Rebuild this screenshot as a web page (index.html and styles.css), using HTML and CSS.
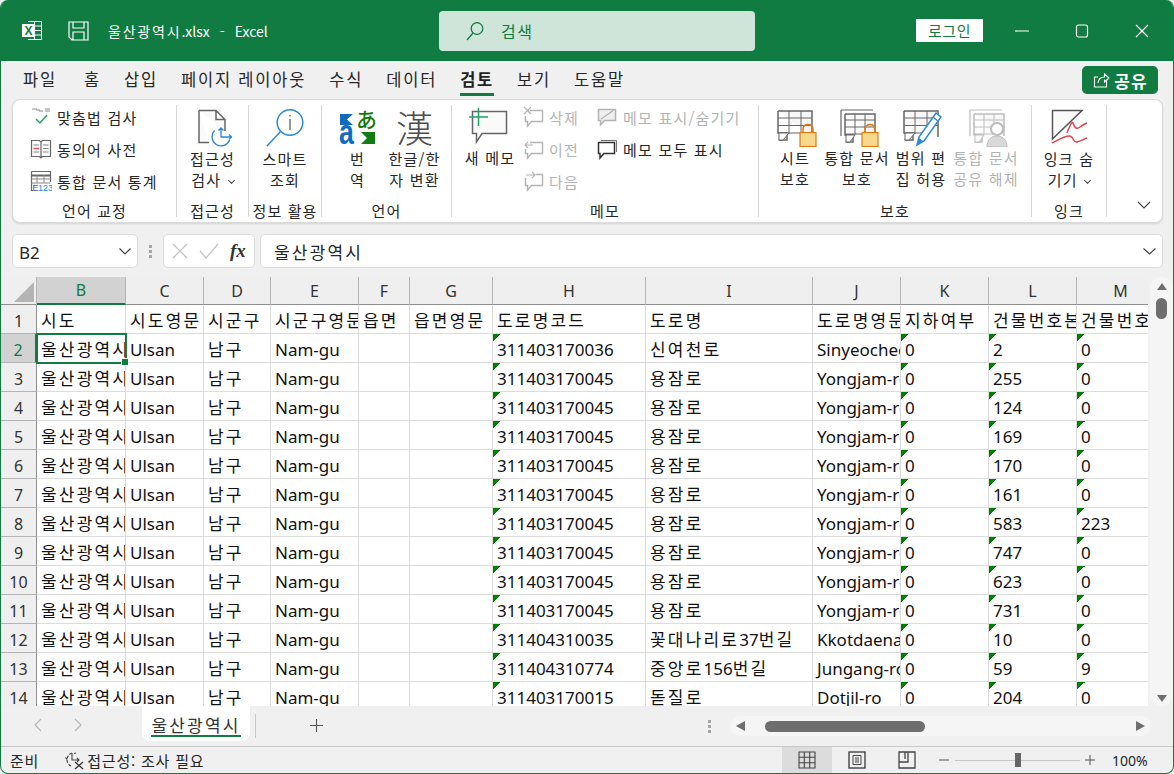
FILE: index.html
```html
<!DOCTYPE html>
<html lang="ko">
  <head>
    <meta charset="UTF-8" />
    <title>울산광역시.xlsx - Excel</title>
    <link rel="stylesheet" href="styles.css">
  </head>
  <body>
    <svg class="defs" width="0" height="0">
      <symbol id="grid" viewBox="0 0 36 32"><path d="M1 1H35V27M1 1V23H10V30H1.500" fill="#f7f7f7" stroke="currentColor" stroke-width="1.500"/><path d="M1 8H35M1 15.500H35M1 23H27M12 1V24M24 1V24" fill="none" stroke="currentColor" stroke-width="1"/><path d="M2 23H12L6 30H2Z" fill="#fff" stroke="currentColor"/></symbol>
      <symbol id="grid-book" viewBox="0 0 36 34"><path d="M1 1H33M1 1V27" fill="none" stroke="currentColor" stroke-width="1.200"/><path d="M5 5H35V27M5 5V26H13V33H5.500" fill="#f7f7f7" stroke="currentColor" stroke-width="1.500"/><path d="M5 11H35M5 18H35M5 25H28M15 5V26M25 5V26" fill="none" stroke="currentColor" stroke-width="1"/><path d="M6 26H15L10 33H6Z" fill="#fff" stroke="currentColor"/></symbol>
      <symbol id="lock" viewBox="0 0 18 24"><path d="M4 10V6.500C4 3.500 6 1.500 9 1.500S14 3.500 14 6.500V10" fill="none" stroke="#e07b12" stroke-width="1.500"/><rect x="1" y="9.500" width="16" height="14" fill="#f8d98b" stroke="#e07b12" stroke-width="1.200"/></symbol>
    </svg>

    <div class="window">
      <!-- 제목 표시줄 -->
      <header class="titlebar">
        <svg class="logo" width="22" height="21" viewBox="0 0 22 21">
          <path d="M7 1.500H20.500V19.500H7M13.500 1.500V19.500M7 6H20.500M7 10.500H20.500M7 15H20.500" fill="none" stroke="#fff"/>
          <rect x="1" y="4" width="12" height="13" fill="#fff"/>
          <text x="3.500" y="15" class="logo-x">X</text>
        </svg>
        <svg class="save" width="21" height="20" viewBox="0 0 21 20">
          <path d="M1 1H20V19H4L1 16ZM5 1V7H16V1M5 19V11H16V19" fill="none" stroke="#fff" stroke-width="1.200"/>
        </svg>
        <span class="doc-title"><span class="doc-ko">울산광역시</span>.xlsx<span class="doc-sep">-</span>Excel</span>
        <div class="search">
          <svg width="20" height="20" viewBox="0 0 20 20"><circle cx="12" cy="7.500" r="5.800" fill="none" stroke="#107c41" stroke-width="1.300"/><path d="M8 12L2 19" stroke="#107c41" stroke-width="1.300"/></svg>
          <span>검색</span>
        </div>
        <button class="login">로그인</button>
        <div class="win-btns">
          <svg width="14" height="14" viewBox="0 0 14 14"><path d="M0 7H14" stroke="#fff" stroke-width="1.200"/></svg>
          <svg width="14" height="14" viewBox="0 0 14 14"><rect x="1.500" y="1" width="11" height="12" rx="2" fill="none" stroke="#fff" stroke-width="1.200"/></svg>
          <svg width="14" height="14" viewBox="0 0 14 14"><path d="M1 1L13 13M13 1L1 13" stroke="#fff" stroke-width="1.200"/></svg>
        </div>
      </header>

      <!-- 리본 탭 -->
      <nav class="tabs">
        <span class="tab first">파일</span>
        <span class="tab">홈</span>
        <span class="tab">삽입</span>
        <span class="tab">페이지 레이아웃</span>
        <span class="tab">수식</span>
        <span class="tab">데이터</span>
        <span class="tab active">검토</span>
        <span class="tab">보기</span>
        <span class="tab">도움말</span>
        <button class="share">
          <svg width="18" height="18" viewBox="0 0 18 18"><path d="M6 6H2.500V16H14.500V10M6 12C6.500 8 9 6 12.500 6V3L17 7L12.500 11V8.500" fill="none" stroke="#fff" stroke-width="1.100"/></svg>
          공유
        </button>
      </nav>

      <!-- 리본 -->
      <section class="ribbon">
        <div class="group g-proof">
          <div class="group-body stack">
            <div class="small">
              <svg width="22" height="22" viewBox="0 0 22 22"><path d="M2 3H7V5M9 3V5H13M15 3H20M15 5H20" fill="none" stroke="#8a8a8a"/><path d="M6 13L10 17L17 9" fill="none" stroke="#21a366" stroke-width="1.500"/></svg>
              <span>맞춤법 검사</span>
            </div>
            <div class="small">
              <svg width="22" height="22" viewBox="0 0 22 22"><path d="M1.500 2.500H9.500L11 4L12.500 2.500H20.500V18.500H12.500L11 20L9.500 18.500H1.500ZM11 4V20" fill="#fafafa" stroke="#666" stroke-width="1.200"/><path d="M3.500 7H9M13 7H18.500M13 10.500H18.500M3.500 14H9M13 14H18.500" stroke="#888"/><path d="M3.500 10.500H9" stroke="#e8515a" stroke-width="1.500"/></svg>
              <span>동의어 사전</span>
            </div>
            <div class="small">
              <svg width="22" height="22" viewBox="0 0 22 22"><path d="M1.500 1.500H20.500V12M1.500 1.500V20.500H3" fill="#fff" stroke="#666" stroke-width="1.200"/><path d="M1.500 5.500H20.500" stroke="#666" stroke-width="2"/><path d="M1.500 9H20.500M7 5V13M14 5V13M1.500 13H20.500" stroke="#888"/><text x="2.500" y="21" class="mini-e">E</text><text x="8" y="21" class="mini-num">123</text></svg>
              <span>통합 문서 통계</span>
            </div>
          </div>
          <div class="group-label">언어 교정</div>
        </div>

        <div class="group g-access">
          <div class="group-body row">
            <div class="big">
              <svg width="40" height="40" viewBox="0 0 40 40">
                <path d="M7 3.500H24L33 12.500V24M24 3.500V12.500H33M17 35.500H7V3.500" fill="#fafafa" stroke="#666" stroke-width="1.500"/>
                <path d="M22.600 23.600A9 9 0 1 0 37.500 33" fill="#fff" stroke="#2b88d8" stroke-width="1.400"/>
                <path d="M29 21V30H39M37 27.500L39.500 30L37 32.500M26.500 23.500L29 21L31.500 23.500" fill="none" stroke="#2b88d8" stroke-width="1.300"/>
              </svg>
              <span>접근성<br>검사 <i class="caret"></i></span>
            </div>
          </div>
          <div class="group-label">접근성</div>
        </div>

        <div class="group g-info">
          <div class="group-body row">
            <div class="big">
              <svg width="42" height="40" viewBox="0 0 42 40">
                <circle cx="26" cy="15.500" r="12.800" fill="#fff" stroke="#2b88d8" stroke-width="1.500"/>
                <path d="M16.500 24.500L3 39" stroke="#2b88d8" stroke-width="1.500"/>
                <path d="M26 12V23" stroke="#555" stroke-width="1.200"/><path d="M26 8V9.500" stroke="#555" stroke-width="1.200"/>
              </svg>
              <span>스마트<br>조회</span>
            </div>
          </div>
          <div class="group-label">정보 활용</div>
        </div>

        <div class="group g-lang">
          <div class="group-body row">
            <div class="big w-trans">
              <svg width="38" height="40" viewBox="0 0 38 40">
                <path d="M1 7H14L8 12.500L14 18H1Z" fill="#0f6cbd"/>
                <text transform="translate(0 37) scale(0.950 1.250)" class="tr-a">a</text>
                <text x="17" y="20" class="tr-jp">あ</text>
                <path d="M22 25H36V37H22L28 31Z" fill="#107c10"/>
              </svg>
              <span>번<br>역</span>
            </div>
            <div class="big w-hanja">
              <div class="hanja">漢</div>
              <span>한글/한<br>자 변환</span>
            </div>
          </div>
          <div class="group-label">언어</div>
        </div>

        <div class="group g-memo">
          <div class="group-body row">
            <div class="big w-memo">
              <svg width="42" height="40" viewBox="0 0 42 40">
                <path d="M3.500 4.500H37.500V26.500H13L7.500 35V26.500H3.500Z" fill="#fafafa" stroke="#666" stroke-width="1.500"/>
                <path d="M9.500 1V19M0 10H19" stroke="#21a366" stroke-width="1.500"/>
              </svg>
              <span>새 메모</span>
            </div>
            <div class="stack memo-nav">
              <div class="small off"><svg width="22" height="22" viewBox="0 0 22 22"><path d="M8 4.500H20.500V15.500H9.500L5.500 20V15.500H3.500V10" fill="none" stroke="currentColor" stroke-width="1.500"/><path d="M2 1L9 8M9 1L2 8" stroke="currentColor" stroke-width="1.200"/></svg><span>삭제</span></div>
              <div class="small off"><svg width="22" height="22" viewBox="0 0 22 22"><path d="M8 4.500H20.500V15.500H9.500L5.500 20V15.500H3.500V11" fill="none" stroke="currentColor" stroke-width="1.500"/><path d="M11 7H3M6 4L3 7L6 10" fill="none" stroke="currentColor" stroke-width="1.200"/></svg><span>이전</span></div>
              <div class="small off"><svg width="22" height="22" viewBox="0 0 22 22"><path d="M3.500 8V15.500H5.500V20L9.500 15.500H20.500V4.500H14" fill="none" stroke="currentColor" stroke-width="1.500"/><path d="M4 5H13M10 2L13 5L10 8" fill="none" stroke="currentColor" stroke-width="1.200"/></svg><span>다음</span></div>
            </div>
            <div class="stack memo-show">
              <div class="small off"><svg width="22" height="22" viewBox="0 0 22 22"><path d="M2.500 3.500H19.500V14.500H8.500L4.500 19V14.500H2.500Z" fill="#efefef" stroke="currentColor" stroke-width="1.500"/><path d="M5 13L18 4" stroke="currentColor" stroke-width="1.300"/></svg><span>메모 표시/숨기기</span></div>
              <div class="small"><svg width="22" height="22" viewBox="0 0 22 22"><path d="M5 2.500H20.500V14" fill="none" stroke="#777"/><path d="M2.500 4.500H18.500V15.500H8L4 20V15.500H2.500Z" fill="#fff" stroke="#333" stroke-width="1.500"/></svg><span>메모 모두 표시</span></div>
            </div>
          </div>
          <div class="group-label">메모</div>
        </div>

        <div class="group g-protect">
          <div class="group-body row">
            <div class="big w-sheet">
              <div class="lock-icon"><svg class="sheet-svg" width="36" height="32"><use href="#grid"/></svg><svg class="lock-svg" width="18" height="24"><use href="#lock"/></svg></div>
              <span>시트<br>보호</span>
            </div>
            <div class="big w-book">
              <div class="lock-icon"><svg class="book-svg" width="36" height="34"><use href="#grid-book"/></svg><svg class="lock-svg" width="18" height="24"><use href="#lock"/></svg></div>
              <span>통합 문서<br>보호</span>
            </div>
            <div class="big w-range">
              <div class="lock-icon"><svg class="sheet-svg" width="36" height="32"><use href="#grid"/></svg>
                <svg class="pen-svg" width="28" height="36" viewBox="0 0 28 36"><path d="M21 2L26 6L9 30L2 34L4 26Z" fill="#fff" stroke="#2b88d8" stroke-width="1.500"/><path d="M18 6L23 10" stroke="#2b88d8" stroke-width="1.500"/><path d="M2 34L4 27L8 30Z" fill="#2b88d8"/></svg>
              </div>
              <span>범위 편<br>집 허용</span>
            </div>
            <div class="big w-unshare off">
              <div class="lock-icon"><svg class="book-svg" width="36" height="34"><use href="#grid-book"/></svg>
                <svg class="user-svg" width="22" height="26" viewBox="0 0 22 26"><circle cx="11" cy="8" r="6" fill="#fff" stroke="#bbb" stroke-width="2"/><path d="M1 26C1 19 5 15 11 15S21 19 21 26Z" fill="#d9d9d9" stroke="#bbb"/></svg>
              </div>
              <span>통합 문서<br>공유 해제</span>
            </div>
          </div>
          <div class="group-label">보호</div>
        </div>

        <div class="group g-ink">
          <div class="group-body row">
            <div class="big">
              <svg width="38" height="40" viewBox="0 0 38 40">
                <path d="M2.500 3.500H32L2.500 32Z" fill="#fafafa" stroke="#555" stroke-width="1.500"/>
                <path d="M17 26C20 18 22 14 23 16C25 22 27 22 30 20C32 18 35 17 37 16M2 36C8 33 16 28 20 29C24 30 23 36 27 35C31 34 34 32 37 31" fill="none" stroke="#e8424a" stroke-width="1.500"/>
              </svg>
              <span>잉크 숨<br>기기 <i class="caret"></i></span>
            </div>
          </div>
          <div class="group-label">잉크</div>
        </div>

        <div class="collapse">
          <svg width="14" height="8" viewBox="0 0 14 8"><path d="M1 1L7 7L13 1" fill="none" stroke="#444" stroke-width="1.100"/></svg>
        </div>
      </section>

      <!-- 수식 입력줄 -->
      <section class="formula">
        <div class="namebox"><span>B2</span>
          <svg width="12" height="7" viewBox="0 0 12 7"><path d="M0.500 0.500L6 6L11.500 0.500" fill="none" stroke="#444" stroke-width="1.200"/></svg>
        </div>
        <div class="dots"><b></b><b></b><b></b></div>
        <div class="fx-box">
          <svg width="16" height="16" viewBox="0 0 16 16"><path d="M1 1L15 15M15 1L1 15" stroke="#c4c4c4" stroke-width="1.300"/></svg>
          <svg width="20" height="16" viewBox="0 0 20 16"><path d="M1 8L7 15L19 1" fill="none" stroke="#c4c4c4" stroke-width="1.300"/></svg>
          <span class="fx">fx</span>
        </div>
        <div class="fx-input">
          <span>울산광역시</span>
          <svg width="13" height="7" viewBox="0 0 13 7"><path d="M0.500 0.500L6.500 6L12.500 0.500" fill="none" stroke="#444" stroke-width="1.200"/></svg>
        </div>
      </section>

      <!-- 시트 -->
      <section class="sheet-area">
        <div class="grid-wrap">
          <table class="grid">
            <colgroup>
              <col class="c-row"><col class="c-b"><col class="c-c"><col class="c-d"><col class="c-e"><col class="c-f"><col class="c-g"><col class="c-h"><col class="c-i"><col class="c-j"><col class="c-k"><col class="c-l"><col class="c-m">
            </colgroup>
            <thead>
              <tr>
                <th class="corner"><i></i></th>
                <th class="cur-col">B</th><th>C</th><th>D</th><th>E</th><th>F</th><th>G</th><th>H</th><th>I</th><th>J</th><th>K</th><th>L</th><th>M</th>
              </tr>
            </thead>
            <tbody>
              <tr><th>1</th><td class="ko">시도</td><td class="ko">시도영문</td><td class="ko">시군구</td><td class="ko">시군구영문</td><td class="ko">읍면</td><td class="ko">읍면영문</td><td class="ko">도로명코드</td><td class="ko">도로명</td><td class="ko">도로명영문</td><td class="ko">지하여부</td><td class="ko">건물번호본번</td><td class="ko">건물번호부번</td></tr>
              <tr><th class="cur-row">2</th><td class="ko sel"><span class="clip">울산광역시</span><span class="handle"></span></td><td>Ulsan</td><td class="ko">남구</td><td>Nam-gu</td><td></td><td></td><td class="n">311403170036</td><td class="ko">신여천로</td><td>Sinyeocheon-ro</td><td class="n">0</td><td class="n">2</td><td class="n">0</td></tr>
              <tr><th>3</th><td class="ko">울산광역시</td><td>Ulsan</td><td class="ko">남구</td><td>Nam-gu</td><td></td><td></td><td class="n">311403170045</td><td class="ko">용잠로</td><td>Yongjam-ro</td><td class="n">0</td><td class="n">255</td><td class="n">0</td></tr>
              <tr><th>4</th><td class="ko">울산광역시</td><td>Ulsan</td><td class="ko">남구</td><td>Nam-gu</td><td></td><td></td><td class="n">311403170045</td><td class="ko">용잠로</td><td>Yongjam-ro</td><td class="n">0</td><td class="n">124</td><td class="n">0</td></tr>
              <tr><th>5</th><td class="ko">울산광역시</td><td>Ulsan</td><td class="ko">남구</td><td>Nam-gu</td><td></td><td></td><td class="n">311403170045</td><td class="ko">용잠로</td><td>Yongjam-ro</td><td class="n">0</td><td class="n">169</td><td class="n">0</td></tr>
              <tr><th>6</th><td class="ko">울산광역시</td><td>Ulsan</td><td class="ko">남구</td><td>Nam-gu</td><td></td><td></td><td class="n">311403170045</td><td class="ko">용잠로</td><td>Yongjam-ro</td><td class="n">0</td><td class="n">170</td><td class="n">0</td></tr>
              <tr><th>7</th><td class="ko">울산광역시</td><td>Ulsan</td><td class="ko">남구</td><td>Nam-gu</td><td></td><td></td><td class="n">311403170045</td><td class="ko">용잠로</td><td>Yongjam-ro</td><td class="n">0</td><td class="n">161</td><td class="n">0</td></tr>
              <tr><th>8</th><td class="ko">울산광역시</td><td>Ulsan</td><td class="ko">남구</td><td>Nam-gu</td><td></td><td></td><td class="n">311403170045</td><td class="ko">용잠로</td><td>Yongjam-ro</td><td class="n">0</td><td class="n">583</td><td class="n">223</td></tr>
              <tr><th>9</th><td class="ko">울산광역시</td><td>Ulsan</td><td class="ko">남구</td><td>Nam-gu</td><td></td><td></td><td class="n">311403170045</td><td class="ko">용잠로</td><td>Yongjam-ro</td><td class="n">0</td><td class="n">747</td><td class="n">0</td></tr>
              <tr><th>10</th><td class="ko">울산광역시</td><td>Ulsan</td><td class="ko">남구</td><td>Nam-gu</td><td></td><td></td><td class="n">311403170045</td><td class="ko">용잠로</td><td>Yongjam-ro</td><td class="n">0</td><td class="n">623</td><td class="n">0</td></tr>
              <tr><th>11</th><td class="ko">울산광역시</td><td>Ulsan</td><td class="ko">남구</td><td>Nam-gu</td><td></td><td></td><td class="n">311403170045</td><td class="ko">용잠로</td><td>Yongjam-ro</td><td class="n">0</td><td class="n">731</td><td class="n">0</td></tr>
              <tr><th>12</th><td class="ko">울산광역시</td><td>Ulsan</td><td class="ko">남구</td><td>Nam-gu</td><td></td><td></td><td class="n">311404310035</td><td class="ko">꽃대나리로<span class="num">37</span>번길</td><td>Kkotdaenari-ro</td><td class="n">0</td><td class="n">10</td><td class="n">0</td></tr>
              <tr><th>13</th><td class="ko">울산광역시</td><td>Ulsan</td><td class="ko">남구</td><td>Nam-gu</td><td></td><td></td><td class="n">311404310774</td><td class="ko">중앙로<span class="num">156</span>번길</td><td>Jungang-ro</td><td class="n">0</td><td class="n">59</td><td class="n">9</td></tr>
              <tr><th>14</th><td class="ko">울산광역시</td><td>Ulsan</td><td class="ko">남구</td><td>Nam-gu</td><td></td><td></td><td class="n">311403170015</td><td class="ko">돋질로</td><td>Dotjil-ro</td><td class="n">0</td><td class="n">204</td><td class="n">0</td></tr>
            </tbody>
          </table>
        </div>
        <div class="vscroll">
          <i class="arrow up"></i>
          <i class="v-thumb"></i>
          <i class="arrow down"></i>
        </div>
      </section>

      <!-- 시트 탭 -->
      <section class="sheetbar">
        <svg class="nav-l" width="8" height="14" viewBox="0 0 8 14"><path d="M7 1L1 7L7 13" fill="none" stroke="#b4b4b4" stroke-width="1.100"/></svg>
        <svg class="nav-r" width="8" height="14" viewBox="0 0 8 14"><path d="M1 1L7 7L1 13" fill="none" stroke="#b4b4b4" stroke-width="1.100"/></svg>
        <div class="sheet-tab"><span>울산광역시</span></div>
        <i class="tab-sep"></i>
        <svg class="add" width="13" height="13" viewBox="0 0 13 13"><path d="M6.500 0V13M0 6.500H13" stroke="#555" stroke-width="1.100"/></svg>
        <div class="dots h-dots"><b></b><b></b><b></b></div>
        <div class="hscroll">
          <i class="arrow left"></i>
          <i class="h-thumb"></i>
          <i class="arrow right"></i>
        </div>
      </section>

      <!-- 상태 표시줄 -->
      <footer class="statusbar">
        <span class="ready">준비</span>
        <svg class="acc" width="20" height="20" viewBox="0 0 20 20">
          <path d="M8 3A7 7 0 0 0 7 16M3 9.500L1.500 7.500M10 3.500L12 3" fill="none" stroke="#444" stroke-width="1.200" stroke-dasharray="3 1.500"/>
          <path d="M8 3V10H15M13 8L15 10L13 12" fill="none" stroke="#444" stroke-width="1.100"/>
          <path d="M11 12L19 19M19 12L11 19" stroke="#333" stroke-width="1.300"/>
        </svg>
        <span>접근성: 조사 필요</span>
        <div class="views">
          <div class="view on">
            <svg width="18" height="18" viewBox="0 0 18 18"><path d="M1 1H17V17H1ZM6.300 1V17M11.700 1V17M1 6.300H17M1 11.700H17" fill="none" stroke="#444" stroke-width="1.100"/></svg>
          </div>
          <div class="view">
            <svg width="18" height="18" viewBox="0 0 18 18"><rect x="1" y="1" width="16" height="16" fill="none" stroke="#444" stroke-width="1.400"/><path d="M5 4.500H13V13.500H5ZM7 7H11M7 9H11M7 11H11" fill="none" stroke="#444"/></svg>
          </div>
          <div class="view">
            <svg width="18" height="18" viewBox="0 0 18 18"><path d="M1 1H17V17H1ZM1 11H10V1M7 1V8" fill="none" stroke="#444" stroke-width="1.300"/></svg>
          </div>
        </div>
        <div class="zoom">
          <svg width="10" height="10" viewBox="0 0 10 10"><path d="M0 5H10" stroke="#555"/></svg>
          <div class="slider"><i></i></div>
          <svg width="10" height="10" viewBox="0 0 10 10"><path d="M0 5H10M5 0V10" stroke="#555"/></svg>
          <span class="pct">100%</span>
        </div>
      </footer>
    </div>
  </body>
</html>
```

FILE: styles.css
```css
* {
  box-sizing: border-box;
}

html,
body {
  margin: 0;
  padding: 0;
  background: #f0f0f0;
}

body {
  width: 1174px;
  height: 774px;
  overflow: hidden;
  font-family: "Noto Sans CJK KR", "Noto Sans", sans-serif;
  font-size: 15px;
  color: #262626;
}

.defs {
  position: absolute;
}

i {
  display: block;
  font-style: normal;
}

button {
  border: 0;
  font: inherit;
  padding: 0;
}

/* window */
.window {
  width: 1174px;
  height: 774px;
  display: flex;
  flex-direction: column;
  background: #f0f0f0;
  border: 1px solid #107c41;
  border-top: 0;
  border-radius: 8px;
  overflow: hidden;
}

/* title bar */
.titlebar {
  height: 61px;
  flex: none;
  display: flex;
  align-items: center;
  background: #107c41;
  color: #fff;
}

.logo {
  margin-left: 20px;
}

.logo-x {
  font-family: "Liberation Sans", sans-serif;
  font-weight: 700;
  font-size: 12px;
  fill: #107c41;
}

.save {
  margin-left: 25px;
}

.doc-title {
  width: 331px;
  margin-left: 19px;
  font-size: 14px;
  white-space: nowrap;
}

.doc-ko {
  letter-spacing: 1.800px;
}

.doc-sep {
  margin: 0 10px;
}

.search {
  width: 316px;
  height: 40px;
  display: flex;
  align-items: center;
  background: #cfe5d9;
  border-radius: 4px;
  padding-left: 26px;
  color: #107c41;
  font-size: 16px;
  letter-spacing: 1.500px;
}

.search span {
  margin-left: 16px;
}

.login {
  width: 67px;
  height: 23px;
  margin-left: 161px;
  background: #fff;
  color: #107c41;
  font-size: 15px;
  letter-spacing: 0.500px;
  line-height: 23px;
}

.win-btns {
  display: flex;
  gap: 46px;
  margin-left: 32px;
}

/* ribbon tabs */
.tabs {
  height: 38px;
  flex: none;
  display: flex;
  align-items: flex-start;
  gap: 25px;
  padding-left: 22px;
  position: relative;
}

.tab {
  height: 35px;
  padding-top: 6px;
  font-size: 16.500px;
  letter-spacing: 1.800px;
  white-space: nowrap;
  margin-right: -2px;
}

.tab.first {
  margin-right: 2px;
}

.tab.active {
  font-weight: 700;
  color: #1f1f1f;
  border-bottom: 3px solid #107c41;
}

.share {
  position: absolute;
  top: 5px;
  right: 15px;
  width: 76px;
  height: 28px;
  display: flex;
  align-items: center;
  justify-content: center;
  gap: 4px;
  background: #107c41;
  color: #fff;
  border-radius: 5px;
  font-weight: 700;
  font-size: 17px;
  letter-spacing: 1px;
}

/* ribbon */
.ribbon {
  height: 124px;
  flex: none;
  margin: 0 10px 0 11px;
  display: flex;
  background: #fff;
  border: 1px solid #dadada;
  border-radius: 8px;
  box-shadow: 0 1px 2px rgba(0, 0, 0, 0.12);
}

.group {
  margin: 5px 0;
  border-right: 1px solid #d6d6d6;
  display: flex;
  flex-direction: column;
  flex: none;
}

.g-proof { width: 164px; }
.g-access { width: 72px; }
.g-info { width: 73px; }
.g-lang { width: 130px; }
.g-memo { width: 307px; }
.g-protect { width: 273px; }
.g-ink { width: 75px; }

.group-body {
  height: 94px;
}

.group-body.row {
  display: flex;
  justify-content: center;
}

.group-label {
  height: 18px;
  line-height: 23px;
  text-align: center;
  font-size: 15px;
  letter-spacing: 1.100px;
  white-space: nowrap;
}

.stack {
  display: flex;
  flex-direction: column;
  gap: 8px;
}

.g-proof .stack {
  padding-left: 17px;
}

.small {
  height: 24px;
  display: flex;
  align-items: center;
  gap: 5px;
  font-size: 15px;
  letter-spacing: 1.200px;
  white-space: nowrap;
}

.mini-e,
.mini-num {
  font-family: "Liberation Sans", sans-serif;
  font-size: 9px;
  letter-spacing: 0;
  fill: #555;
}

.mini-num {
  fill: #2b88d8;
}

.off {
  color: #b3b3b3;
}

.big {
  display: flex;
  flex-direction: column;
  align-items: center;
  padding-top: 2px;
  font-size: 15px;
  letter-spacing: 1.200px;
  line-height: 20.500px;
  text-align: center;
  white-space: nowrap;
}

.big > span {
  margin-top: 1px;
}

.g-access .big > span,
.g-info .big > span,
.g-lang .big > span,
.g-ink .big > span {
  margin-top: 2px;
}

.caret {
  display: inline-block;
  width: 5px;
  height: 5px;
  margin: 0 0 3px 2px;
  border-right: 1.200px solid #444;
  border-bottom: 1.200px solid #444;
  transform: rotate(45deg);
}

.tr-a {
  font-family: "Liberation Sans", sans-serif;
  font-weight: 700;
  font-size: 28px;
  letter-spacing: 0;
  fill: #0f6cbd;
}

.tr-jp {
  font-family: "Noto Sans CJK JP", sans-serif;
  font-weight: 500;
  font-size: 21px;
  letter-spacing: 0;
  fill: #107c10;
}

.w-trans {
  width: 50px;
  margin: 0 4px 0 2px;
}

.w-hanja {
  width: 56px;
}

.hanja {
  height: 40px;
  font-family: "Noto Sans CJK SC", sans-serif;
  font-weight: 300;
  font-size: 37px;
  line-height: 40px;
  color: #4d4d4d;
  letter-spacing: 0;
}

.g-memo .group-body.row {
  justify-content: flex-start;
}

.w-memo {
  width: 76px;
}

.memo-nav {
  width: 74px;
  margin-left: -6px;
}

.g-protect .group-body.row {
  justify-content: flex-start;
  padding-left: 6px;
}

.lock-icon {
  position: relative;
  width: 40px;
  height: 40px;
  color: #666;
}

.sheet-svg {
  position: absolute;
  left: 2px;
  top: 3px;
}

.book-svg {
  position: absolute;
  left: 3px;
  top: 2px;
}

.lock-svg {
  position: absolute;
  right: -2px;
  bottom: 0;
}

.pen-svg {
  position: absolute;
  right: -2px;
  bottom: 0;
}

.user-svg {
  position: absolute;
  right: -2px;
  bottom: 0;
}

.w-unshare .lock-icon {
  color: #bdbdbd;
}

.w-sheet { width: 60px; }
.w-book { width: 64px; }
.w-range { width: 64px; }
.w-unshare { width: 66px; }

.collapse {
  flex: 1;
  display: flex;
  align-items: flex-end;
  justify-content: flex-end;
  padding: 0 11px 13px 0;
}

/* formula bar */
.formula {
  height: 34px;
  flex: none;
  margin: 11px 10px 0 11px;
  display: flex;
  align-items: stretch;
}

.namebox,
.fx-box,
.fx-input {
  background: #fff;
  border: 1px solid #dcdcdc;
  border-radius: 5px;
  display: flex;
  align-items: center;
}

.namebox {
  width: 126px;
  justify-content: space-between;
  padding: 0 6px;
  font-family: "Noto Sans", sans-serif;
  font-size: 17px;
}

.namebox span {
  padding-top: 2px;
}

.dots {
  display: flex;
  flex-direction: column;
  gap: 2px;
  justify-content: center;
  width: 25px;
  align-items: center;
}

.dots b {
  width: 3px;
  height: 3px;
  background: #a5a5a5;
}

.fx-box {
  width: 92px;
  padding-left: 8px;
  gap: 11px;
}

.fx {
  font-family: "Liberation Serif", serif;
  font-style: italic;
  font-weight: 700;
  font-size: 19px;
  color: #333;
}

.fx-input {
  flex: 1;
  margin-left: 5px;
  justify-content: space-between;
  padding: 0 6px 0 13px;
  font-size: 17px;
  letter-spacing: 2.200px;
}

/* sheet */
.sheet-area {
  height: 429px;
  flex: none;
  margin-top: 9px;
  display: flex;
  overflow: hidden;
}

.grid-wrap {
  width: 1147px;
  height: 429px;
  overflow: hidden;
  background: #fff;
}

.grid {
  width: 1164px;
  table-layout: fixed;
  border-collapse: separate;
  border-spacing: 0;
  font-family: "Noto Sans", "Noto Sans CJK KR", sans-serif;
  font-size: 17px;
  color: #111;
}

.c-row { width: 36px; }
.c-b { width: 89px; }
.c-c { width: 78px; }
.c-d { width: 67px; }
.c-e { width: 88px; }
.c-f { width: 51px; }
.c-g { width: 83px; }
.c-h { width: 153px; }
.c-i { width: 167px; }
.c-j { width: 88px; }
.c-k { width: 88px; }
.c-l { width: 88px; }
.c-m { width: 88px; }

.grid th {
  background: #efefef;
  font-weight: 400;
  font-size: 16px;
  color: #333;
  padding: 0;
  text-align: center;
}

.grid thead th {
  height: 28px;
  border-right: 1px solid #b4b4b4;
  border-bottom: 1px solid #8f8f8f;
}

.grid tbody th {
  height: 29px;
  border-right: 1px solid #8f8f8f;
  border-bottom: 1px solid #b4b4b4;
  padding-top: 3px;
}

.grid .corner {
  position: relative;
}

.corner i {
  position: absolute;
  left: 13px;
  top: 5px;
  width: 0;
  height: 0;
  border-left: 20px solid transparent;
  border-bottom: 20px solid #b4b4b4;
}

.grid .cur-col {
  background: #d2d2d2;
  color: #107c41;
  border-bottom: 2px solid #107c41;
}

.grid .cur-row {
  background: #d2d2d2;
  color: #107c41;
  border-right: 2px solid #107c41;
}

.grid td {
  height: 29px;
  padding: 3px 0 0 4px;
  border-right: 1px solid #dcdcdc;
  border-bottom: 1px solid #dcdcdc;
  white-space: nowrap;
  overflow: hidden;
  line-height: 24px;
}

.grid td.ko {
  letter-spacing: 2.200px;
}

.grid td .num {
  letter-spacing: 0;
}

.grid td.n {
  background: linear-gradient(135deg, #008000 50%, transparent 50%) no-repeat 0 0 / 8px 8px;
}

.grid td.sel {
  position: relative;
  overflow: visible;
  outline: 2px solid #107c41;
  outline-offset: -1px;
}

.clip {
  display: block;
  overflow: hidden;
}

.handle {
  position: absolute;
  right: -3px;
  bottom: -3px;
  width: 6px;
  height: 6px;
  background: #107c41;
  border: 1px solid #107c41;
  outline: 1px solid #fff;
}

.vscroll {
  width: 23px;
  margin-left: 2px;
  background: #f5f5f5;
  border-radius: 11px;
  display: flex;
  flex-direction: column;
  align-items: center;
  padding-top: 6px;
}

.arrow {
  width: 0;
  height: 0;
}

.arrow.up {
  border: 5.500px solid transparent;
  border-top: 0;
  border-bottom: 7px solid #6e6e6e;
}

.arrow.down {
  border: 5.500px solid transparent;
  border-bottom: 0;
  border-top: 7px solid #6e6e6e;
  margin-top: auto;
  margin-bottom: 4px;
}

.v-thumb {
  width: 11px;
  height: 21px;
  margin-top: 8px;
  background: #6e6e6e;
  border-radius: 6px;
}

/* sheet tabs */
.sheetbar {
  height: 40px;
  flex: none;
  display: flex;
  align-items: flex-start;
}

.nav-l {
  margin: 12px 0 0 33px;
}

.nav-r {
  margin: 12px 0 0 32px;
}

.sheet-tab {
  width: 108px;
  height: 35px;
  margin-left: 60px;
  background: #fff;
  border-radius: 0 0 8px 8px;
  display: flex;
  justify-content: center;
}

.sheet-tab span {
  height: 31px;
  font-size: 17px;
  letter-spacing: 2.200px;
  line-height: 38px;
  border-bottom: 2px solid #107c41;
  color: #333;
}

.tab-sep {
  width: 1px;
  height: 24px;
  margin: 8px 0 0 5px;
  background: #c8c8c8;
}

.add {
  margin: 13px 0 0 54px;
}

.h-dots {
  width: 8px;
  margin: 14px 0 0 382px;
}

.h-dots b {
  width: 3px;
  height: 3px;
}

.hscroll {
  width: 421px;
  height: 20px;
  margin: 10px 0 0 17px;
  background: #f5f5f5;
  border-radius: 10px;
  display: flex;
  align-items: center;
  padding: 0 6px;
}

.arrow.left {
  border: 5.500px solid transparent;
  border-left: 0;
  border-right: 9px solid #6e6e6e;
}

.arrow.right {
  border: 5.500px solid transparent;
  border-right: 0;
  border-left: 9px solid #6e6e6e;
  margin-left: auto;
}

.h-thumb {
  width: 160px;
  height: 11px;
  margin-left: 20px;
  background: #6e6e6e;
  border-radius: 6px;
}

/* status bar */
.statusbar {
  flex: 1;
  display: flex;
  align-items: center;
  border-top: 1px solid #c9c9c9;
  padding: 0 25px 0 9px;
  font-size: 15px;
  letter-spacing: 0.800px;
}

.acc {
  margin: 0 3px 0 25px;
}

.views {
  margin-left: auto;
  display: flex;
  height: 100%;
}

.view {
  width: 50px;
  display: flex;
  align-items: center;
  justify-content: center;
}

.view.on {
  background: #dcdcdc;
}

.zoom {
  display: flex;
  align-items: center;
  margin-left: 7px;
}

.slider {
  width: 125px;
  height: 1px;
  margin: 0 5px 0 6px;
  background: #c4c4c4;
  position: relative;
}

.slider i {
  position: absolute;
  left: 60px;
  top: -7px;
  width: 6px;
  height: 14px;
  background: #666;
}

.pct {
  width: 36px;
  margin-left: 17px;
  font-family: "Noto Sans", sans-serif;
  font-size: 14px;
  letter-spacing: 0;
  white-space: nowrap;
}
```
